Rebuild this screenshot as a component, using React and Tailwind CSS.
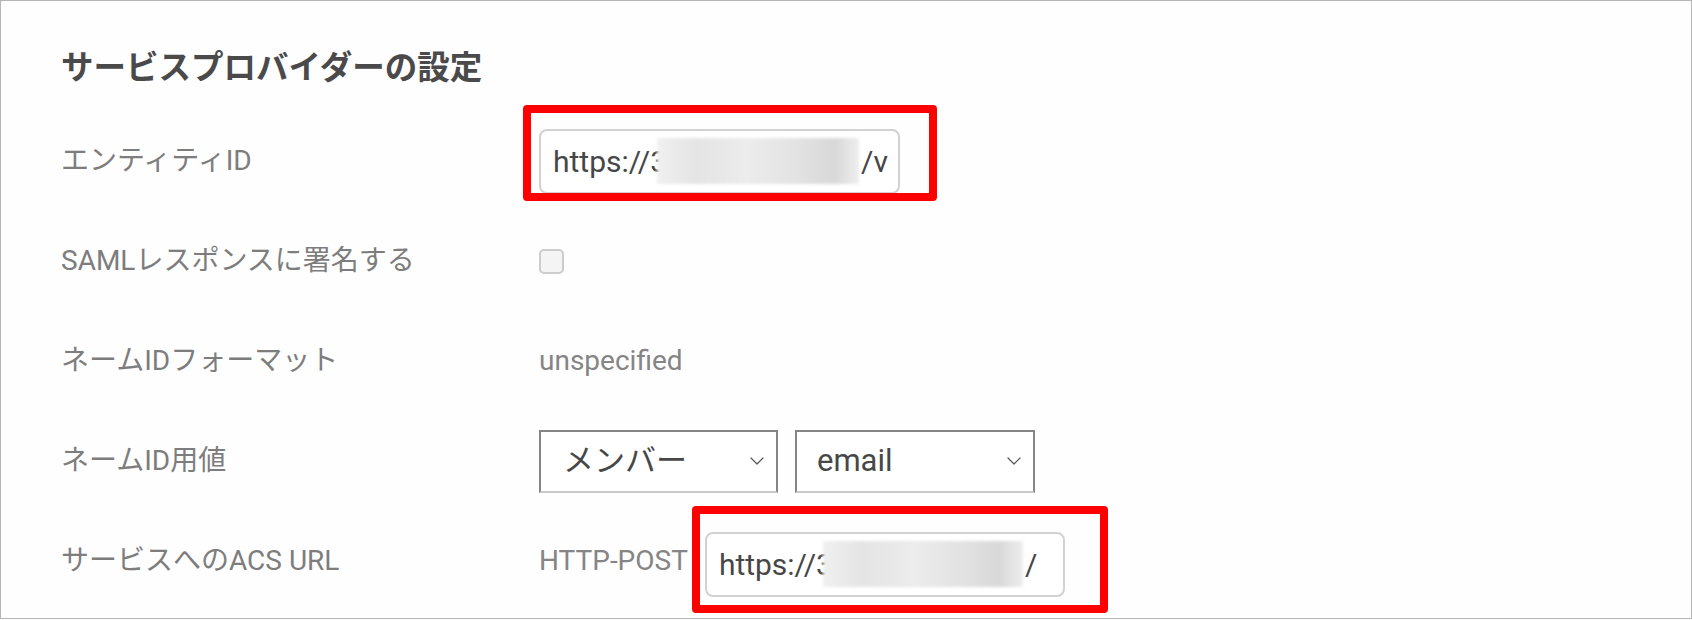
import { ChevronDown } from 'lucide-react';

const font = { fontFamily: 'Roboto, "Noto Sans CJK JP", sans-serif' };

function Blur({ width }) {
  return (
    <div
      className={`h-[46px] shrink-0 -ml-[10px] relative bg-[linear-gradient(90deg,#f0f0f0_0%,#e4e4e4_20%,#ececec_45%,#e2e2e2_70%,#d8d8d8_88%,#eeeeee_100%)] blur-[1.5px] ${width}`}
    />
  );
}

function UrlField({ className, blurWidth, tail, redBox }) {
  return (
    <div className={`relative shrink-0 ${className}`}>
      <div className="h-[65px] w-full rounded-[8px] border-2 border-[#d2d2d2] bg-white pl-[12px] flex items-center overflow-hidden whitespace-nowrap text-[30px] text-[#474747]">
        <span>https://3</span>
        <Blur width={blurWidth} />
        <span className="pl-[2px]">{tail}</span>
      </div>
      <div className={`absolute border-[8px] border-[#ff0000] rounded-[4px] ${redBox}`} />
    </div>
  );
}

function Row({ label, children }) {
  return (
    <div className="h-[100px] flex items-center">
      <div className="w-[478px] shrink-0 text-[28px] text-[#7d7d7d]">{label}</div>
      <div className="flex items-center">{children}</div>
    </div>
  );
}

function Select({ value, className }) {
  return (
    <div className={`h-[63px] border-2 border-[#858585] border-b-[#c9c9c9] bg-white flex items-center justify-between text-[31px] text-[#474747] ${className}`}>
      <span>{value}</span>
      <ChevronDown className="w-[24px] h-[24px] text-[#555]" strokeWidth={1.2} />
    </div>
  );
}

export default function App() {
  return (
    <div style={font} className="w-[1692px] h-[619px] border border-[#b5b5b5] bg-[#fefefe] overflow-hidden pl-[60px] pt-[43px]">
      <h2 className="text-[32.5px] leading-[48px] font-bold text-[#4a4a4a]">サービスプロバイダーの設定</h2>
      <div className="mt-[19px]">
        <Row label="エンティティID">
          <UrlField
            className="w-[361px]"
            blurWidth="w-[202px]"
            tail="/v"
            redBox="left-[-16px] top-[-24px] w-[414px] h-[96px]"
          />
        </Row>
        <Row label="SAMLレスポンスに署名する">
          <div className="w-[25px] h-[25px] rounded-[5px] border-2 border-[#cccccc] bg-[#f4f4f4]" />
        </Row>
        <Row label="ネームIDフォーマット">
          <span className="text-[28px] text-[#858585]">unspecified</span>
        </Row>
        <Row label="ネームID用値">
          <div className="flex gap-[17px]">
            <Select value="メンバー" className="w-[239px] pl-[22px] pr-[7px]" />
            <Select value="email" className="w-[240px] pl-[20px] pr-[7px]" />
          </div>
        </Row>
        <Row label="サービスへのACS URL">
          <span className="text-[28px] text-[#858585] mr-[17px]">HTTP-POST</span>
          <UrlField
            className="w-[360px] mt-[6px]"
            blurWidth="w-[200px]"
            tail="/"
            redBox="left-[-13px] top-[-26px] w-[416px] h-[107px]"
          />
        </Row>
      </div>
    </div>
  );
}
